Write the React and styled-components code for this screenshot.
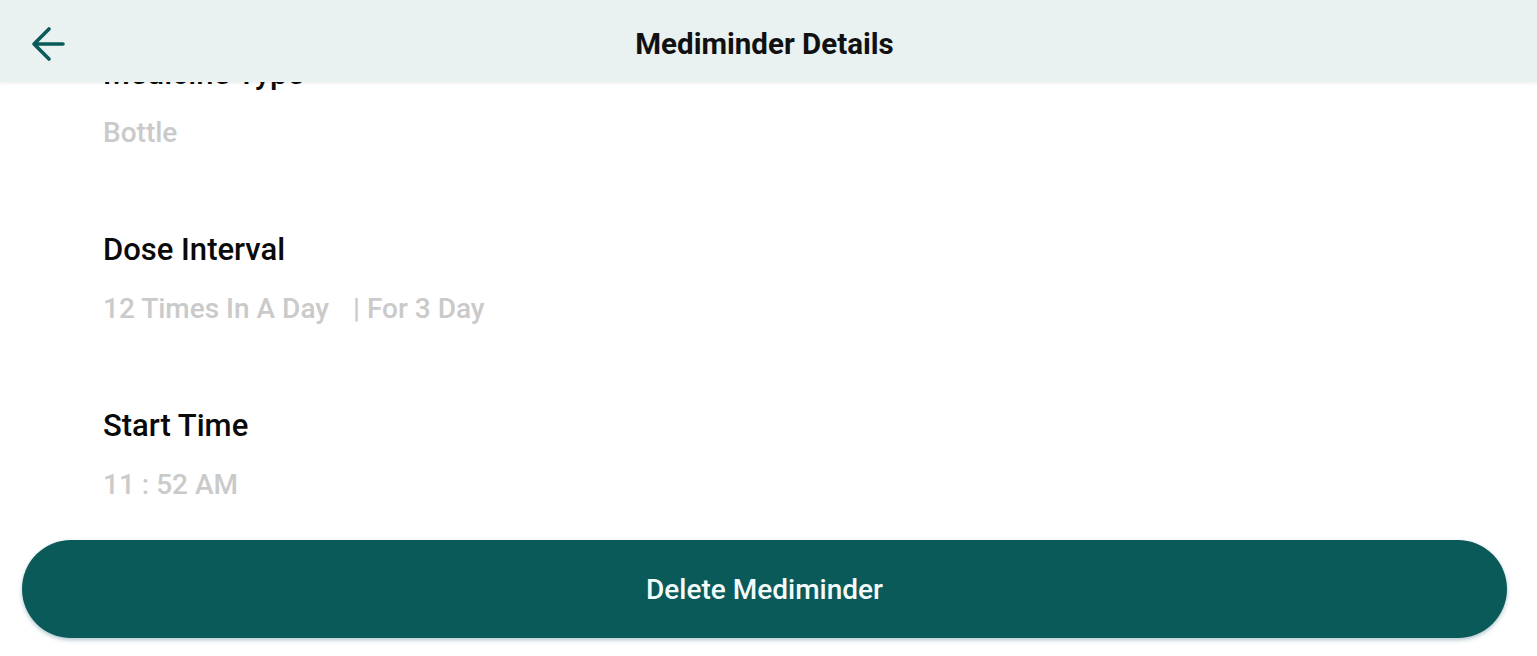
import React from 'react';
import styled, { createGlobalStyle } from 'styled-components';

const GlobalStyle = createGlobalStyle`
  html, body {
    margin: 0;
    padding: 0;
    background: #ffffff;
  }
  body {
    font-family: Roboto, "Noto Sans", sans-serif;
  }
`;

const Screen = styled.div`
  width: 1537px;
  height: 656px;
  display: flex;
  flex-direction: column;
  overflow: hidden;
  background: #ffffff;
`;

const TopBar = styled.header`
  position: relative;
  z-index: 2;
  height: 82px;
  flex-shrink: 0;
  display: flex;
  align-items: center;
  justify-content: center;
  background: #e9f2f1;
  box-shadow: 0 1px 3px rgba(0, 0, 0, 0.08);
`;

const BackButton = styled.button`
  position: absolute;
  left: 26px;
  top: 22px;
  width: 44px;
  height: 44px;
  padding: 0;
  border: none;
  background: transparent;
  display: flex;
  align-items: center;
  justify-content: center;
  cursor: pointer;
`;

const Title = styled.h1`
  margin: 0 8px 0 0;
  padding-top: 5px;
  font-family: Roboto, sans-serif;
  font-weight: 700;
  font-size: 29.5px;
  color: #111111;
`;

const ScrollArea = styled.main`
  flex: 1;
  overflow: hidden;
`;

const FieldList = styled.div`
  display: flex;
  flex-direction: column;
  gap: 79px;
  padding-left: 103px;
  margin-top: -28px;
`;

const Field = styled.div`
  display: flex;
  flex-direction: column;
  gap: 21px;
`;

const Label = styled.div`
  font-family: Roboto, sans-serif;
  font-size: 31px;
  line-height: 40px;
  font-weight: 500;
  color: #0a0a0a;
`;

const Value = styled.div`
  font-family: Roboto, sans-serif;
  font-size: 28px;
  line-height: 36px;
  font-weight: 500;
  color: #cacaca;
  display: flex;
  gap: ${({ $gap }) => $gap || 0}px;
`;

const Footer = styled.div`
  padding: 0 30px 18px 22px;
`;

const DeleteButton = styled.button`
  width: 100%;
  height: 98px;
  border: none;
  border-radius: 49px;
  background: #0b5a5a;
  color: #f4fbfb;
  font-family: Roboto, sans-serif;
  font-weight: 500;
  font-size: 28px;
  box-shadow: 0 2px 4px rgba(30, 90, 110, 0.35);
  cursor: pointer;
`;

const BackIcon = () => (
  <svg width="36" height="36" viewBox="0 0 36 36" fill="none">
    <path
      d="M33 18H5M19 3L4 18l15 15"
      stroke="#0b5a5a"
      strokeWidth="3.6"
      strokeLinecap="round"
      strokeLinejoin="round"
    />
  </svg>
);

const fields = [
  { label: 'Medicine Type', value: ['Bottle'] },
  { label: 'Dose Interval', value: ['12 Times In A Day', '| For 3 Day'] },
  { label: 'Start Time', value: ['11 : 52 AM'] },
];

const App = () => {
  return (
    <Screen>
      <GlobalStyle />
      <TopBar>
        <BackButton aria-label="Back">
          <BackIcon />
        </BackButton>
        <Title>Mediminder Details</Title>
      </TopBar>
      <ScrollArea>
        <FieldList>
          {fields.map((f) => (
            <Field key={f.label}>
              <Label>{f.label}</Label>
              <Value $gap={24}>
                {f.value.map((v) => (
                  <span key={v}>{v}</span>
                ))}
              </Value>
            </Field>
          ))}
        </FieldList>
      </ScrollArea>
      <Footer>
        <DeleteButton>Delete Mediminder</DeleteButton>
      </Footer>
    </Screen>
  );
};

export default App;
